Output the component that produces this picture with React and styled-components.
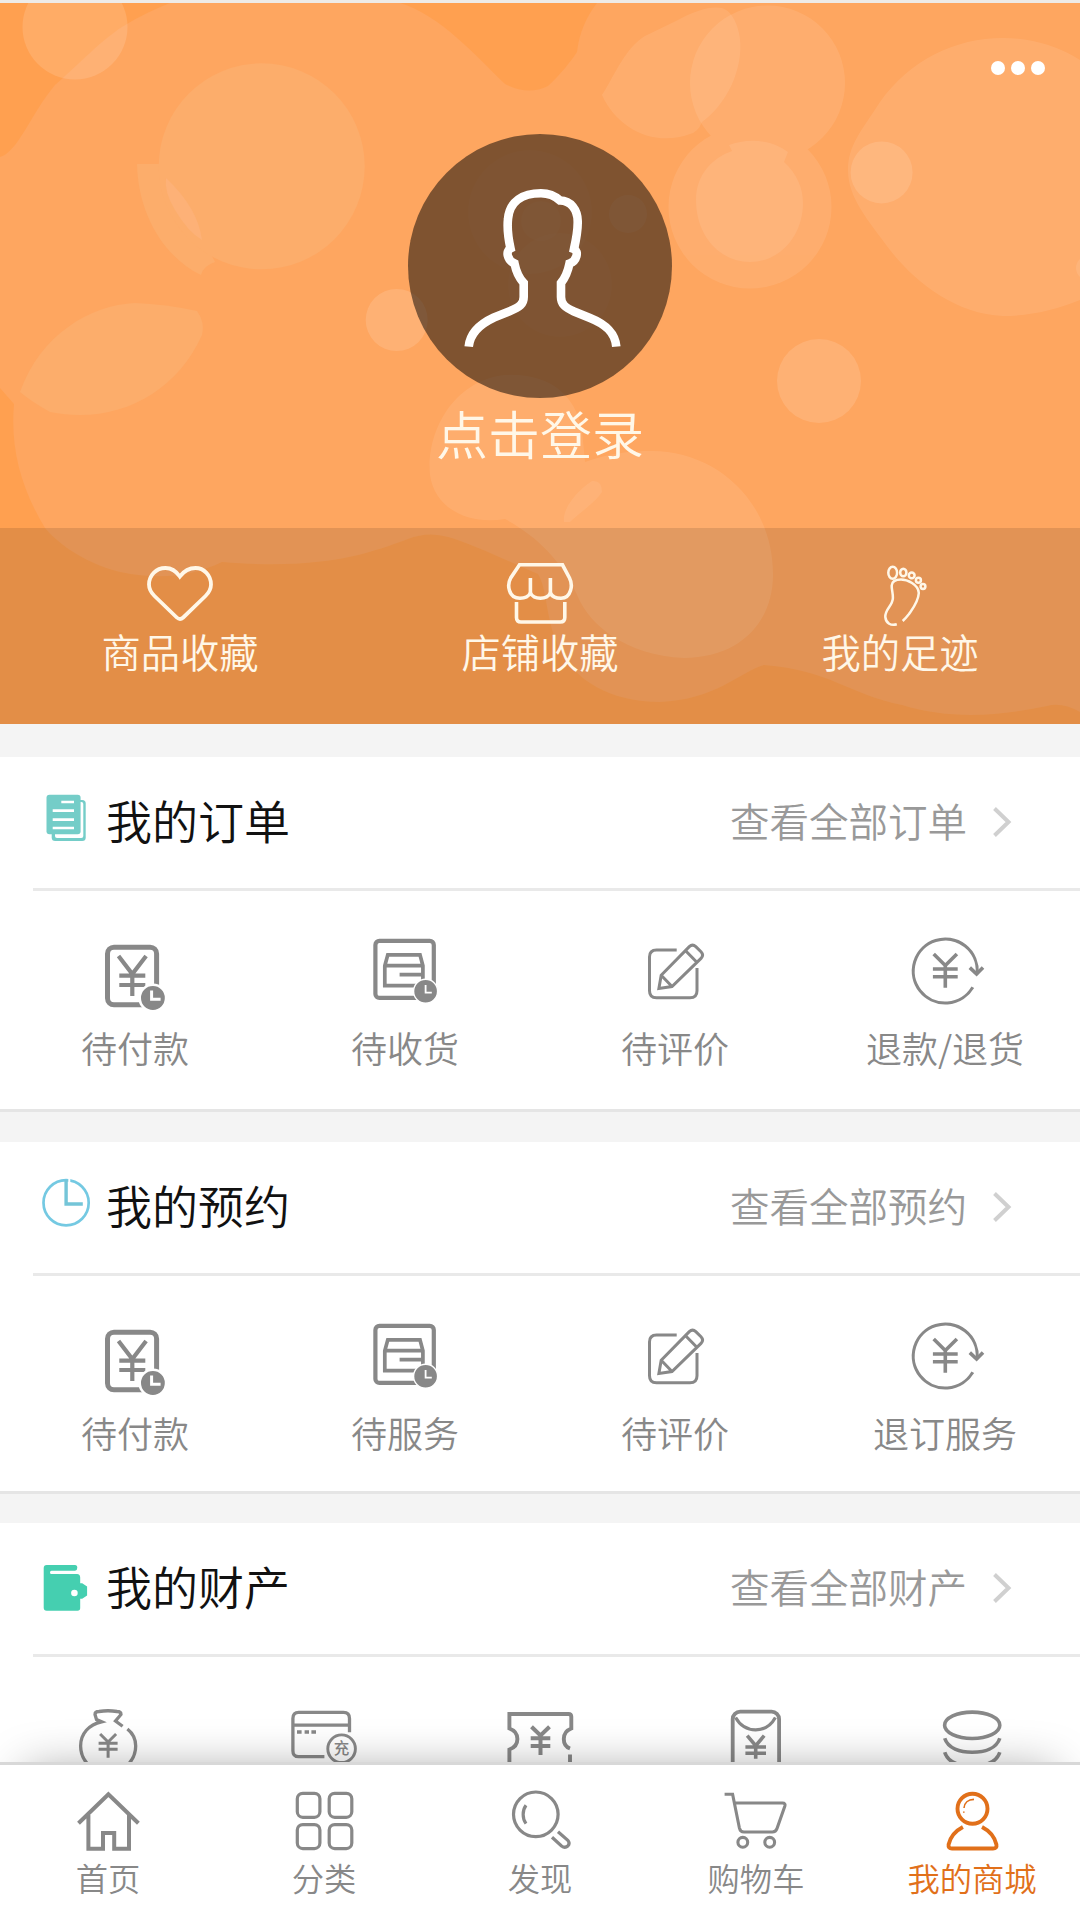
import React, { useState } from "react";
import styled, { createGlobalStyle } from "styled-components";

const YuanMark = ({ cx, top, arm, joint, bars, half, bottom, width }) => (
  <path
    d={`M${cx - arm} ${top}L${cx} ${joint}L${cx + arm} ${top}M${cx} ${joint}V${bottom}M${cx - half} ${bars[0]}H${cx + half}M${cx - half} ${bars[1]}H${cx + half}`}
    strokeWidth={width}
  />
);

const HeartIcon = () => (
  <Glyph $size={72} $stroke={3.8} viewBox="0 0 72 72">
    <path d="M35.8 16.5C32 11 27 8 21.5 8C12 8 5 15.5 5 24.5C5 29.5 7 32.5 10.5 36L32.8 57.5Q36 60.5 39.2 57.5L61.5 36C65 32.5 67 29.5 67 24.5C67 15.5 60 8 51.5 8C45 8 40 11 35.8 16.5Z" />
  </Glyph>
);

const StoreIcon = () => (
  <Glyph $size={72} $stroke={3.6} viewBox="0 0 72 72">
    <path d="M15.5 4.8H58.5L65.5 18C67.5 22 68 26 66.5 30.5C65 35.5 61.5 38.3 57 38.3C52 38.3 48 36.5 46.4 33C44.5 36.5 41 38.3 36.4 38.3C32 38.3 28.3 36.5 26.4 33C24.5 36.5 20.5 38.3 16 38.3C11 38.3 7 35.5 5.5 30.5C4 26 4.5 22 6.7 18Z" />
    <path d="M26.4 18V33M46.4 18V33M12.5 42V57.5Q12.5 62 17 62H56.3Q60.8 62 60.8 57.5V42" />
  </Glyph>
);

const FootIcon = () => (
  <Glyph $size={72} $stroke={2.5} viewBox="0 0 72 72">
    <path d="M32.8 64.3C27 66 22 63.5 21.3 57C21 49 28.7 46 28.9 38C29 33 27.5 29 27.7 25.5C28 21.5 32 19.5 37 19.5C43 19.5 54.5 24.5 54.8 33C54.3 42 48.5 49 45 54Q41.5 58.5 38.7 61" />
    <ellipse cx="28.7" cy="12.7" rx="4.4" ry="6" />
    <ellipse cx="39.3" cy="12.5" rx="3.1" ry="3.8" />
    <circle cx="47.7" cy="15.4" r="2.9" />
    <circle cx="54.4" cy="20.3" r="2.5" />
    <circle cx="59" cy="26.5" r="2.4" />
  </Glyph>
);

const OrdersIcon = () => (
  <HeadGlyph viewBox="0 0 48 48">
    <rect x="9.7" y="6" width="34" height="41" rx="3.5" fill="#74cdc8" />
    <rect x="13" y="8" width="28.3" height="36" rx="2" fill="#fff" />
    <rect x="4.5" y="0.7" width="34.1" height="39.5" rx="3" fill="#74cdc8" />
    <path
      d="M19.3 8H32M10.7 16.7H32M10.7 25.7H32M10.7 34H32"
      stroke="#fff"
      strokeWidth="2.7"
    />
  </HeadGlyph>
);

const ClockIcon = () => (
  <HeadGlyph viewBox="0 0 48 48">
    <circle cx="24.1" cy="23.7" r="22.6" fill="none" stroke="#74c9e2" strokeWidth="2.7" />
    <path d="M27.3 0V5" stroke="#fff" strokeWidth="2" />
    <path d="M24.1 1V25H40.8" fill="none" stroke="#74c5d8" strokeWidth="3.4" />
  </HeadGlyph>
);

const WalletIcon = () => (
  <HeadGlyph viewBox="0 0 48 48">
    <path
      d="M4.7 5H33Q35.3 5 35.3 7.8T33 10.8H9.5Q8 10.8 8 12.4T9.5 14H35Q38.2 14 38.2 17.5V23.3H40.2L45.1 26.5V35.5L40.2 38.7H38.2V48Q38.2 50.7 35.5 50.7H4.7Q1.7 50.7 1.7 47.7V8Q1.7 5 4.7 5Z"
      fill="#45cfb0"
    />
    <circle cx="32.4" cy="33" r="3.3" fill="#fff" />
  </HeadGlyph>
);

const PayIcon = () => (
  <Glyph $size={76} $stroke={5} viewBox="0 0 76 76">
    <rect x="10.5" y="11.2" width="49.1" height="57.6" rx="6.5" />
    <YuanMark cx={35.3} top={20} arm={13.8} joint={38} bars={[39.7, 49]} half={13} bottom={60} width={4.2} />
    <circle cx="55.9" cy="62" r="13.2" fill="#888" stroke="#fff" strokeWidth="2.6" />
    <path d="M54.6 54.5V63.2H63.6" stroke="#fff" strokeWidth="3" />
  </Glyph>
);

const ReceiveIcon = () => (
  <Glyph $size={76} $stroke={4.2} viewBox="0 0 76 76">
    <rect x="8.4" y="4.9" width="58.4" height="57" rx="4" />
    <path
      d="M20.8 18.8H53L55.9 29.7V49.7H17.8V29.7ZM17.8 29.7H55.9M32.6 38.7H55"
      strokeWidth="3.7"
    />
    <circle cx="58.6" cy="55.3" r="12" fill="#888" stroke="#fff" strokeWidth="1.4" />
    <path d="M58.6 49V56.7H64.8" stroke="#fff" strokeWidth="1.8" />
  </Glyph>
);

const ReviewIcon = () => (
  <Glyph $size={76} $stroke={3} viewBox="0 0 76 76">
    <path d="M39.7 14H19.5Q12.5 14 12.5 21V54.7Q12.5 61.7 19.5 61.7H53Q60 61.7 60 54.7V32" />
    <path d="M24.2 39.3L52.3 10.6Q55.5 7.5 58.8 10.6L64 15.8Q67.2 19.2 64 22.4L35 50.5L21.9 52.4ZM24.2 39.3L35 50.5M48.6 14.7L59.6 26" />
  </Glyph>
);

const RefundIcon = () => (
  <Glyph $size={76} $stroke={3.1} viewBox="0 0 76 76">
    <path d="M65.8 51.3A32 32 0 1 1 70.2 37" />
    <path d="M62.8 31.6L69.6 38L76 31.6" strokeWidth="3.6" />
    <YuanMark cx={38.3} top={18} arm={11.6} joint={29.5} bars={[33, 40.7]} half={12.4} bottom={51.7} width={3.6} />
  </Glyph>
);

const BalanceIcon = () => (
  <Glyph $size={72} $stroke={3.3} viewBox="0 0 72 72">
    <path d="M50.6 19.3L43.5 14L49 7.5Q49 4.5 45 4.5Q36 3 27 4.5Q23 4.5 23 7.5L24.5 12.5L29.6 14.8C17 17.5 8.6 26.5 8.6 39C8.6 53 20 66 36 66C52 66 63.7 53 63.7 39C63.7 32 60.5 26 55.4 22" />
    <YuanMark cx={36.1} top={27} arm={8} joint={35} bars={[36.3, 42.3]} half={9.5} bottom={50.7} width={3} />
  </Glyph>
);

const RechargeIcon = () => (
  <Glyph $size={72} $stroke={3.3} viewBox="0 0 72 72">
    <path d="M36.4 49.7H10.7Q4.9 49.7 4.9 43.7V11.5Q4.9 5.4 10.7 5.4H55.5Q61.5 5.4 61.5 11.5V25.3M4.9 18.2H61.5" />
    <path d="M9 25H13.6M16.6 25H21M23.4 25H28" />
    <circle cx="53.6" cy="41.7" r="13.8" strokeWidth="2.9" />
    <GlyphText x="53.6" y="47.3" textAnchor="middle">
      充
    </GlyphText>
  </Glyph>
);

const CouponIcon = () => (
  <Glyph $size={72} $stroke={3.9} viewBox="0 0 72 72">
    <path d="M5.4 60V42.5C11 40.5 13.4 37 13.4 32C13.4 27 11 23.5 5.4 21.5V7H64.5Q67.3 7 67.3 9.8V21.5C62 23.5 59.8 27 59.8 32C59.8 36.5 62 40 66 41.5M66 47.5V60" />
    <YuanMark cx={36.5} top={19.7} arm={9} joint={28.5} bars={[31.3, 39]} half={9.8} bottom={48} width={4} />
  </Glyph>
);

const RedPacketIcon = () => (
  <Glyph $size={72} $stroke={3.8} viewBox="0 0 72 72">
    <rect x="12.7" y="4.6" width="46.4" height="60" rx="7.5" />
    <path d="M15.6 10.5C20 18.5 27 22.8 35.7 22.8C44.5 22.8 51 18.5 55.4 10.5" strokeWidth="3.2" />
    <YuanMark cx={35.7} top={28.7} arm={8.5} joint={38.7} bars={[40, 46.3]} half={10.3} bottom={51.8} width={3.6} />
  </Glyph>
);

const PointsIcon = () => (
  <Glyph $size={72} $stroke={3.6} viewBox="0 0 72 72">
    <ellipse cx="36.2" cy="18.3" rx="27.6" ry="13.2" />
    <path d="M8.7 31.3C12 41.5 24 45.3 36.2 45.3C48.5 45.3 60.5 41.5 63.8 31.3M8.7 45.3C12 55.5 24 59 36.2 59C48.5 59 60.5 55.5 63.8 45.3" />
  </Glyph>
);

const HomeIcon = () => (
  <Glyph $size={64} $stroke={4} viewBox="0 0 64 64">
    <path d="M2.5 35.3L32.4 6.2L62.4 35.3M12.4 27V60.8H27V45H38.2V60.8H53V27" />
  </Glyph>
);

const CategoryIcon = () => (
  <Glyph $size={64} $stroke={3.2} viewBox="0 0 64 64">
    <rect x="5.3" y="5.3" width="22.6" height="24" rx="5.5" />
    <rect x="37.2" y="5.3" width="22.6" height="24" rx="5.5" />
    <rect x="5.3" y="36.6" width="22.6" height="24" rx="5.5" />
    <rect x="37.2" y="36.6" width="22.6" height="24" rx="5.5" />
  </Glyph>
);

const DiscoverIcon = () => (
  <Glyph $size={64} $stroke={3.2} viewBox="0 0 64 64">
    <circle cx="27.8" cy="26.3" r="22.3" />
    <path d="M18 17.2C14.2 22.5 14.2 30.5 18 35.6M44 49.3L53.5 58Q57 60.5 59.8 58T59.8 52.3L50 43.7" />
  </Glyph>
);

const CartIcon = () => (
  <Glyph $size={64} $stroke={3.1} viewBox="0 0 64 64">
    <path d="M.6 6.3H8.6L15.4 40Q16.3 44 20 44H48.3Q51.8 44 53 40.5L60.8 18.2Q61.8 15 58.5 15H10.4" />
    <circle cx="18.8" cy="54.3" r="4.9" />
    <circle cx="45.7" cy="54.3" r="4.9" />
  </Glyph>
);

const MineIcon = () => (
  <Glyph $size={64} $stroke={3.9} viewBox="0 0 64 64">
    <circle cx="32.5" cy="20.7" r="15" />
    <path d="M22.9 38.9C15 43 10 50 8.6 56.5Q8 60.5 12 60.5H53Q57.2 60.5 56.4 56.5C55 50 50 43 42 38.9" />
    <path d="M24 20C24.3 15 28 11.6 34 11.4M23.8 23.5V24.7" strokeWidth="1.6" />
  </Glyph>
);

const Bubbles = () => (
  <BubbleLayer viewBox="0 3 1080 721" preserveAspectRatio="none">
    <path
      fill="#fea660"
      d="M0 157C18 152 30 115 55 85C75 68 105 36 127 24Q145 13 170 3H400C440 15 475 55 505 84Q528 96 548 86C560 75 572 60 577 52Q580 25 597 3H1080V712Q1062 702 1047 706C1000 716 950 720 902 705C850 695 830 670 764 665C740 672 715 700 660 702C610 702 575 680 560 650C545 620 548 590 538 574C510 562 470 543 448 537Q428 531 408 539C365 555 320 570 222 562C190 577 160 580 120 572C80 562 55 540 45 528C22 490 10 450 14 404L0 388Z"
    />
    <g fill="#fcad6b">
      <path d="M137 164H165L215 262Q203 266 201 275C165 258 138 215 137 164Z" />
      <circle cx="261.7" cy="166.3" r="103" />
      <path d="M20 392C40 335 90 305 135 303Q165 304 197 311Q205 322 202 335C175 395 115 425 50 412Q32 402 20 392Z" />
    </g>
    <path fill="#fdb177" d="M166 178Q164 192 175 210Q188 232 202 240Q198 208 166 178Z" />
    <g fill="#fff" fillOpacity="0.13">
      <circle cx="75" cy="27" r="52.5" />
      <circle cx="396.7" cy="320" r="31" />
      <circle cx="819" cy="381" r="42" />
    </g>
    <g fill="#fff" opacity="0.085">
      <circle cx="767.5" cy="83" r="77.5" />
      <circle cx="750" cy="207" r="81.5" />
    </g>
    <g fill="#fff" fillOpacity="0.085">
      <path d="M602 95C615 75 625 48 645 36L678 20Q705 5 722 8Q734 12 739 33C745 60 732 100 702 122Q698 132 690 134C655 147 618 130 602 95Z" />
      <path d="M696 200C696 175 712 158 732 151L729 145C745 139 770 138 788 152L784 162C797 174 803 188 803 203C803 236 780 262 750 262C720 262 696 236 696 200Z" />
      <path d="M1080 60V300C1055 310 1030 316 1003 316C955 314 915 282 890 250C868 220 848 198 848 170C848 145 862 130 880 102C910 60 955 38 1003 38Q1045 38 1080 60Z" />
      <circle cx="1088" cy="268" r="12" />
      <circle cx="628" cy="214" r="19" />
    </g>
    <g fill="#fff" fillOpacity="0.04">
      <circle cx="530" cy="212" r="62" />
      <circle cx="560" cy="285" r="52" />
      <circle cx="541" cy="221" r="20" />
    </g>
    <circle cx="881.6" cy="172.4" r="31" fill="#fff" fillOpacity="0.12" />
    <g fill="#fff" opacity="0.085">
      <path d="M430 475C426 430 455 380 505 375C550 373 575 395 582 430L585 462C610 453 630 451 652 451C715 451 773 500 773 575C773 622 740 658 684 658C625 655 590 625 578 597C562 560 535 535 505 519C470 525 435 510 430 475Z" />
    </g>
    <path fill="#fff" fillOpacity="0.07" d="M564 522C562 508 578 490 592 481Q602 480 602 492C594 504 580 512 570 522Z" />
  </BubbleLayer>
);

const shortcuts = [
  { label: "商品收藏", icon: HeartIcon },
  { label: "店铺收藏", icon: StoreIcon },
  { label: "我的足迹", icon: FootIcon },
];

const sections = [
  {
    title: "我的订单",
    more: "查看全部订单",
    icon: OrdersIcon,
    bodyHeight: 221,
    items: [
      { label: "待付款", icon: PayIcon },
      { label: "待收货", icon: ReceiveIcon },
      { label: "待评价", icon: ReviewIcon },
      { label: "退款/退货", icon: RefundIcon },
    ],
  },
  {
    title: "我的预约",
    more: "查看全部预约",
    icon: ClockIcon,
    bodyHeight: 218,
    items: [
      { label: "待付款", icon: PayIcon },
      { label: "待服务", icon: ReceiveIcon },
      { label: "待评价", icon: ReviewIcon },
      { label: "退订服务", icon: RefundIcon },
    ],
  },
];

const assets = [BalanceIcon, RechargeIcon, CouponIcon, RedPacketIcon, PointsIcon];

const tabs = [
  { id: "home", label: "首页", icon: HomeIcon },
  { id: "category", label: "分类", icon: CategoryIcon },
  { id: "discover", label: "发现", icon: DiscoverIcon },
  { id: "cart", label: "购物车", icon: CartIcon },
  { id: "mine", label: "我的商城", icon: MineIcon },
];

const SectionHeader = ({ title, more, icon: Icon }) => (
  <SectionHead>
    <Icon />
    <SectionTitle>{title}</SectionTitle>
    <MoreLink>
      {more}
      <Chevron viewBox="0 0 20 32">
        <path d="M2.5 2.5L16.5 16L2.5 29.5" />
      </Chevron>
    </MoreLink>
  </SectionHead>
);

const App = () => {
  const [activeTab, setActiveTab] = useState("mine");

  return (
    <>
      <GlobalStyle />
      <Page>
        <Content>
          <Hero>
            <Bubbles />
            <MenuButton aria-label="更多">
              <Dot />
              <Dot />
              <Dot />
            </MenuButton>
            <Profile>
              <Avatar viewBox="0 0 264 264">
                <path d="M60.7 212.7C62 199 72 190 86 183.5L101 177.5C112 173 115.7 170 115.7 163V149C111 144 108 137 106.5 129.5C99 126 97.5 117 102.5 114.5C100 103 99 94 100 85C101.500 67 115 59.3 133 59.3C141 59.3 147 62 152 66.500C163 66.500 169.500 76 169.700 87C170 97 168 106 166 115C171 117 169 127 161.500 129.500C160 137 157 144 153 149V163C153 170 157 173.500 166 177.500L182 184C197 190 207 198 208.300 212.700" />
              </Avatar>
              <LoginText>点击登录</LoginText>
            </Profile>
            <ShortcutBar>
              {shortcuts.map(({ label, icon: Icon }) => (
                <Shortcut key={label}>
                  <Icon />
                  <ShortcutLabel>{label}</ShortcutLabel>
                </Shortcut>
              ))}
            </ShortcutBar>
          </Hero>

          {sections.map((section) => (
            <Section key={section.title}>
              <SectionHeader {...section} />
              <ItemRow $height={section.bodyHeight}>
                {section.items.map(({ label, icon: Icon }) => (
                  <Item key={label}>
                    <Icon />
                    <ItemLabel>{label}</ItemLabel>
                  </Item>
                ))}
              </ItemRow>
            </Section>
          ))}

          <Section>
            <SectionHeader title="我的财产" more="查看全部财产" icon={WalletIcon} />
            <AssetRow>
              {assets.map((Icon, index) => (
                <Item key={index}>
                  <Icon />
                </Item>
              ))}
            </AssetRow>
          </Section>
        </Content>

        <TabBar>
          {tabs.map(({ id, label, icon: Icon }) => (
            <Tab key={id} $active={activeTab === id} onClick={() => setActiveTab(id)}>
              <Icon />
              <TabLabel>{label}</TabLabel>
            </Tab>
          ))}
        </TabBar>
      </Page>
    </>
  );
};

const GlobalStyle = createGlobalStyle`
  * {
    box-sizing: border-box;
  }

  body {
    margin: 0;
    background: #f4f4f4;
    font-family: "Noto Sans CJK SC", "Noto Sans", sans-serif;
    font-weight: 350;
  }

  button {
    font: inherit;
    padding: 0;
    border: none;
    background: none;
    cursor: pointer;
  }
`;

const Page = styled.div`
  display: flex;
  flex-direction: column;
  width: 1080px;
  height: 1920px;
  overflow: hidden;
  background: #f4f4f4;
`;

const Content = styled.main`
  flex: 1;
  min-height: 0;
  overflow: hidden;
  border-top: 3px solid #eeebe8;
`;

const Hero = styled.header`
  position: relative;
  display: flex;
  flex-direction: column;
  height: 721px;
  background: #ffa050;
  color: #fff7e8;
`;

const BubbleLayer = styled.svg`
  position: absolute;
  inset: 0;
  width: 100%;
  height: 100%;
`;

const MenuButton = styled.button`
  position: relative;
  display: flex;
  align-self: flex-end;
  gap: 6px;
  margin: 58px 35px 0 0;
`;

const Dot = styled.span`
  width: 14px;
  height: 14px;
  border-radius: 50%;
  background: #fff;
`;

const Profile = styled.div`
  position: relative;
  display: flex;
  flex: 1;
  flex-direction: column;
  align-items: center;
  padding-top: 59px;
`;

const Avatar = styled.svg`
  width: 264px;
  height: 264px;
  border-radius: 50%;
  background: rgba(0, 0, 0, 0.5);
  fill: none;
  stroke: #fff;
  stroke-width: 8.6;
`;

const LoginText = styled.div`
  font-size: 52px;
  line-height: 60px;
  margin-top: 5px;
`;

const ShortcutBar = styled.nav`
  position: relative;
  display: flex;
  height: 196px;
  background: rgba(0, 0, 0, 0.11);
`;

const Shortcut = styled.a`
  display: flex;
  flex: 1;
  flex-direction: column;
  align-items: center;
  padding-top: 32px;
`;

const ShortcutLabel = styled.span`
  font-size: 39.3px;
  line-height: 44px;
  margin-top: -3px;
`;

const Glyph = styled.svg`
  flex-shrink: 0;
  width: ${({ $size }) => $size}px;
  height: ${({ $size }) => $size}px;
  overflow: visible;
  fill: none;
  stroke: currentColor;
  stroke-width: ${({ $stroke }) => $stroke};
`;

const GlyphText = styled.text`
  fill: currentColor;
  stroke: none;
  font-size: 15.5px;
  font-weight: 500;
`;

const HeadGlyph = styled.svg`
  align-self: flex-start;
  width: 48px;
  height: 48px;
  margin-top: 37px;
  overflow: visible;
`;

const Section = styled.section`
  margin-bottom: 30px;
  background: #fff;

  &:first-of-type {
    margin-top: 33px;
  }

  &:last-of-type {
    margin-top: -1px;
  }
`;

const SectionHead = styled.div`
  display: flex;
  align-items: center;
  height: 134px;
  margin-left: 33px;
  padding: 0 68px 0 9px;
  border-bottom: 3px solid #e9e9e9;
`;

const SectionTitle = styled.h2`
  margin: 0 auto 8px 16px;
  color: #111;
  font-size: 46px;
  font-weight: 350;
  line-height: 56px;
`;

const MoreLink = styled.a`
  display: flex;
  align-items: center;
  gap: 25px;
  margin-bottom: 5px;
  color: #999;
  font-size: 39.5px;
  line-height: 48px;
`;

const Chevron = styled.svg`
  width: 20px;
  height: 32px;
  margin-top: 4px;
  fill: none;
  stroke: #d0d0d0;
  stroke-width: 4;
`;

const ItemRow = styled.div`
  display: flex;
  height: ${({ $height }) => $height}px;
  padding-top: 45px;
  border-bottom: 3px solid #e5e5e5;
`;

const AssetRow = styled.div`
  display: flex;
  height: 240px;
  padding-top: 50px;
`;

const Item = styled.div`
  display: flex;
  flex: 1;
  flex-direction: column;
  align-items: center;
  color: #888;
`;

const ItemLabel = styled.span`
  font-size: 36px;
  line-height: 44px;
  margin-top: 13px;
`;

const TabBar = styled.nav`
  position: relative;
  display: flex;
  height: 158px;
  border-top: 3px solid #d8d8d8;
  background: #fff;
  box-shadow: 0 -16px 48px -26px rgba(0, 0, 0, 0.4);
`;

const Tab = styled.button`
  display: flex;
  flex: 1;
  flex-direction: column;
  align-items: center;
  padding-top: 23px;
  color: ${({ $active }) => ($active ? "#e1701a" : "#888")};
`;

const TabLabel = styled.span`
  font-size: 32.3px;
  line-height: 40px;
  margin-top: 5px;
`;

export default App;
